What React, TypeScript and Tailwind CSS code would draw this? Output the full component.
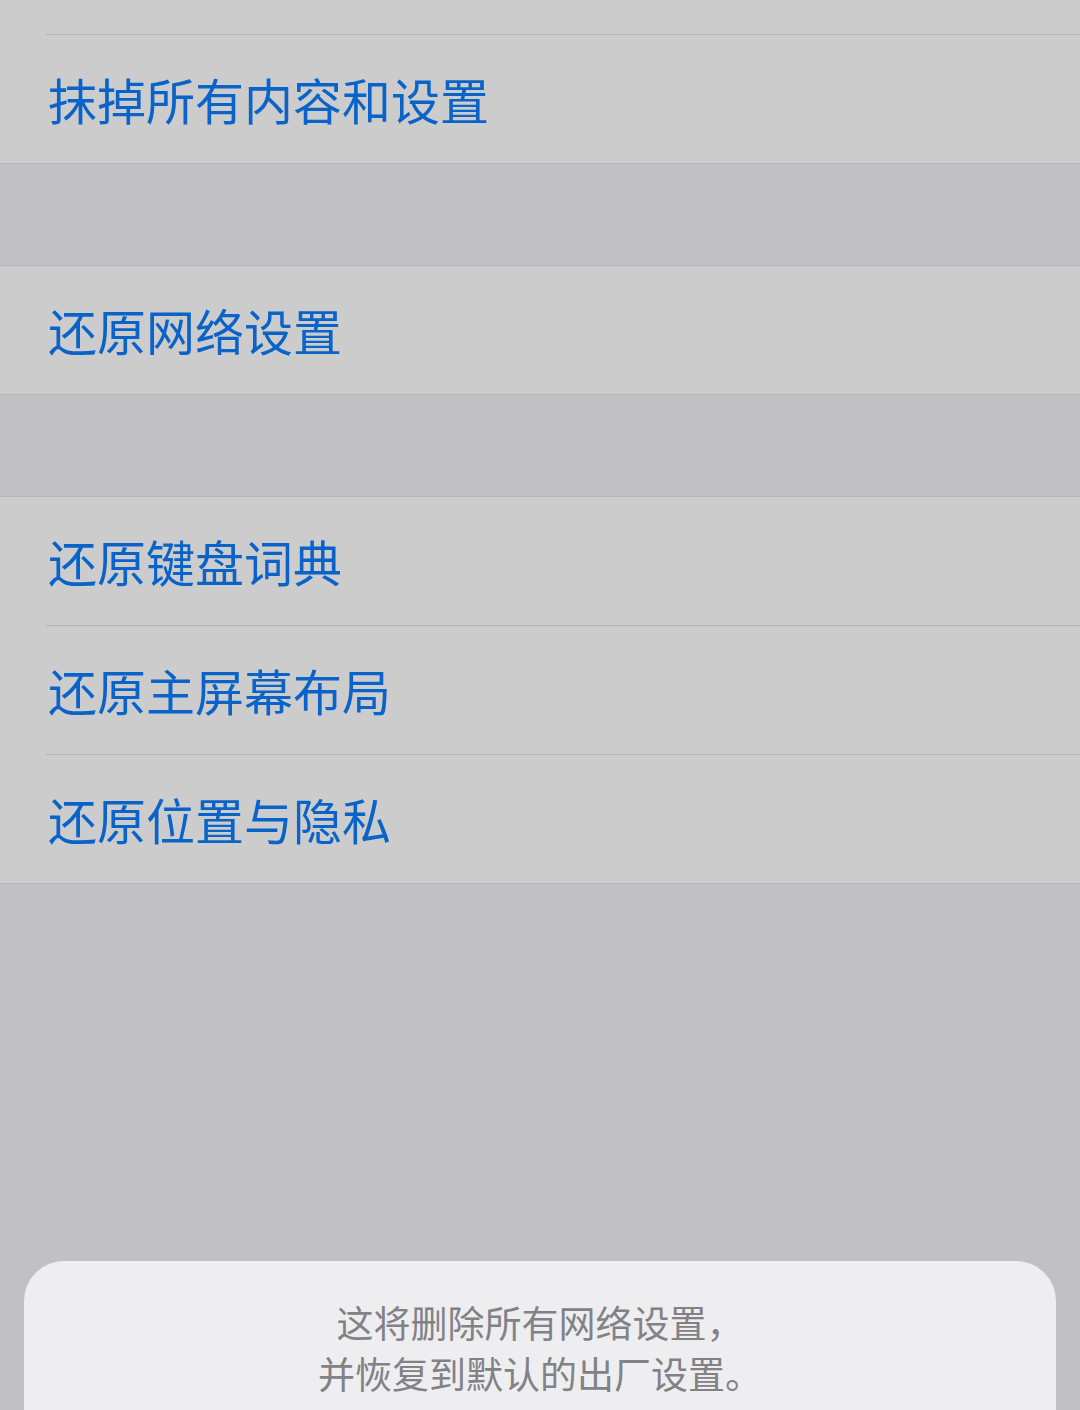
const font = { fontFamily: '"Noto Sans CJK SC", "Noto Sans", sans-serif' };

function Row({ label, divider }: { label: string; divider?: boolean }) {
  return (
    <div className="pl-[46px]">
      <div className={`flex items-center ${divider ? 'h-[129px] border-t border-[#b5b5b7]' : 'h-[128px]'}`}>
        <span className="-mt-[2px] pl-[2px] text-[49px] leading-none text-[#0a63c8]">{label}</span>
      </div>
    </div>
  );
}

export default function App() {
  return (
    <div className="relative h-[1410px] w-[1080px] overflow-hidden bg-[#c1c0c5]" style={font}>
      <div className="border-b border-[#b5b5b7] bg-[#cccccc]">
        <div className="h-[34px]" />
        <Row label="抹掉所有内容和设置" divider />
      </div>

      <div className="h-[101px]" />

      <div className="border-y border-[#b5b5b7] bg-[#cccccc]">
        <Row label="还原网络设置" />
      </div>

      <div className="h-[101px]" />

      <div className="border-y border-[#b5b5b7] bg-[#cccccc]">
        <Row label="还原键盘词典" />
        <Row label="还原主屏幕布局" divider />
        <Row label="还原位置与隐私" divider />
      </div>

      <div className="absolute left-[24px] right-[24px] top-[1261px] h-[200px] rounded-t-[40px] bg-[#eeeef0]">
        <div className="pt-[36px] text-center text-[37px] leading-[51px] text-[#828286]">
          <div>这将删除所有网络设置，</div>
          <div>并恢复到默认的出厂设置。</div>
        </div>
      </div>
    </div>
  );
}
